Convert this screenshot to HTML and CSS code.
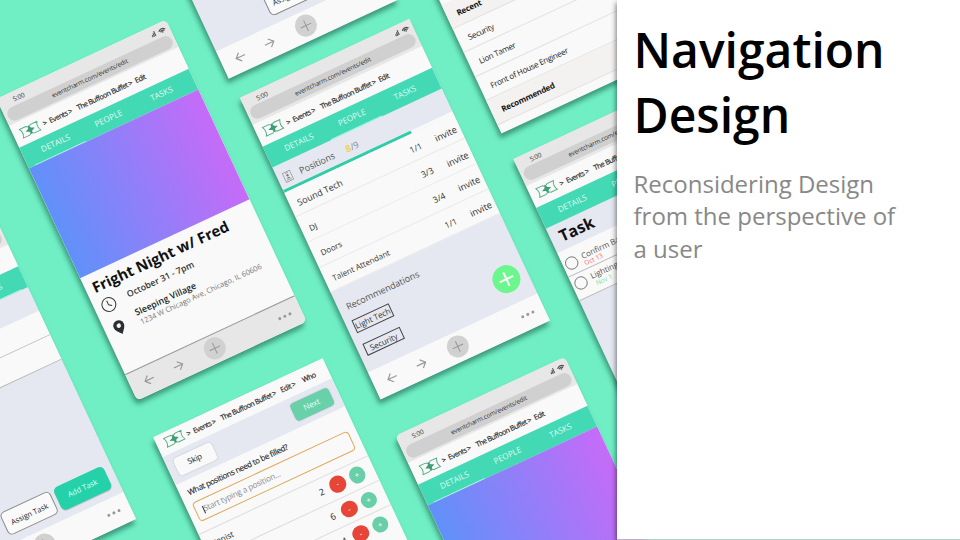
FILE: index.html
```html
<!DOCTYPE html>
<html lang="en">
<head>
<meta charset="utf-8">
<title>Navigation Design</title>
<link rel="stylesheet" href="styles.css">
</head>
<body>
<svg class="defs" aria-hidden="true">
  <symbol id="logo" viewBox="0 0 20 12"><path d="M7.500 1.500H.8Q3.600 6 .8 10.500H7.500L10 9 12.500 10.500H19.200Q16.400 6 19.200 1.500H12.500L10 3 7.500 1.500" fill="none" stroke="#4fae86" stroke-width=".9"/><path d="M10 1.200 11.500 4.500 14.800 6 11.500 7.500 10 10.800 8.500 7.500 5.200 6 8.500 4.500Z" fill="#3f9c75"/></symbol>
  <symbol id="signal" viewBox="0 0 18 7"><path d="M1.500 6.500V4.200H2.600V6.500ZM3 6.500V2.800H4.100V6.500ZM4.500 6.500V1.200H5.600V6.500Z" fill="#555"/><path d="M9.500 4Q13 .4 16.500 4M10.900 5Q13 2.900 15.100 5" fill="none" stroke="#555" stroke-width="1.300"/><circle cx="13" cy="5.700" r=".8" fill="#555"/></symbol>
  <symbol id="left" viewBox="0 0 12 12"><path d="M11 6H1.500M5.800 1.500 1.300 6 5.800 10.500" fill="none" stroke="#999" stroke-width="1.200"/></symbol>
  <symbol id="right" viewBox="0 0 12 12"><path d="M1 6H10.500M6.200 1.500 10.700 6 6.200 10.500" fill="none" stroke="#999" stroke-width="1.200"/></symbol>
  <symbol id="add" viewBox="0 0 24 24"><circle cx="12" cy="12" r="11.500" fill="#d1d1d1"/><path d="M12 6V18M6 12H18" stroke="#969696" stroke-width="1"/></symbol>
  <symbol id="dots" viewBox="0 0 16 4"><g fill="#999"><circle cx="2" cy="2" r="1.600"/><circle cx="8" cy="2" r="1.600"/><circle cx="14" cy="2" r="1.600"/></g></symbol>
</svg>
<main class="slide">
  <section class="art">
    <div class="board">

      <article class="phone at-left">
        <div class="browser"><div class="status"><span>5:00</span><svg class="sig"><use href="#signal"/></svg></div><div class="url">eventcharm.com/events/edit</div></div>
        <nav class="crumbs"></nav>
        <div class="tabs"><span>DETAILS</span><span>PEOPLE</span><span class="on">TASKS</span></div>
        <h3 class="task-title"></h3>
        <div class="task first"></div><div class="task"></div>
        <div class="actions"><span class="assign">Assign Task</span><span class="add-task">Add Task</span></div>
        <footer class="bar"><svg class="arr"><use href="#left"/></svg><svg class="arr"><use href="#right"/></svg><svg class="plus"><use href="#add"/></svg><svg class="dots"><use href="#dots"/></svg></footer>
      </article>

      <article class="phone round at-details">
        <div class="browser"><div class="status"><span>5:00</span><svg class="sig"><use href="#signal"/></svg></div><div class="url">eventcharm.com/events/edit</div></div>
        <nav class="crumbs"><svg class="logo"><use href="#logo"/></svg><span class="c0">&gt;</span><span class="c1">Events &gt;</span><span class="c2">The Buffoon Buffet &gt;</span><span class="c3">Edit</span></nav>
        <div class="tabs"><span class="on">DETAILS</span><span>PEOPLE</span><span>TASKS</span></div>
        <div class="hero"></div>
        <div class="info">
          <h2>Fright Night w/ Fred</h2>
          <div class="line"><svg class="clock" viewBox="0 0 16 16"><circle cx="8" cy="8" r="7" fill="none" stroke="#333" stroke-width="1"/><path d="M7.600 3.600V8.200L10.600 10.200" fill="none" stroke="#333" stroke-width="1"/></svg><b class="date">October 31 - 7pm</b></div>
          <div class="line place"><svg class="pin" viewBox="0 0 13 17"><path fill-rule="evenodd" d="M6.500 .5A6 6 0 0 0 .5 6.500C.5 10 4 13 6.500 16.500 9 13 12.500 10 12.500 6.500A6 6 0 0 0 6.500 .5ZM6.500 4A2.400 2.400 0 1 1 6.500 8.800 2.400 2.400 0 0 1 6.500 4Z" fill="#2b2f31"/></svg><div><b class="venue">Sleeping Village</b><p class="addr">1234 W Chicago Ave, Chicago, IL 60606</p></div></div>
        </div>
        <footer class="bar grey"><svg class="arr"><use href="#left"/></svg><svg class="arr"><use href="#right"/></svg><svg class="plus"><use href="#add"/></svg><svg class="dots"><use href="#dots"/></svg></footer>
      </article>

      <article class="phone at-top">
        <div class="actions"><span class="assign">Assign Task</span><span class="add-task"></span></div>
        <footer class="bar"><svg class="arr"><use href="#left"/></svg><svg class="arr"><use href="#right"/></svg><svg class="plus"><use href="#add"/></svg><svg class="dots"><use href="#dots"/></svg></footer>
      </article>

      <article class="phone at-people">
        <div class="browser"><div class="status"><span>5:00</span><svg class="sig"><use href="#signal"/></svg></div><div class="url">eventcharm.com/events/edit</div></div>
        <nav class="crumbs"><svg class="logo"><use href="#logo"/></svg><span class="c0">&gt;</span><span class="c1">Events &gt;</span><span class="c2">The Buffoon Buffet &gt;</span><span class="c3">Edit</span></nav>
        <div class="tabs"><span>DETAILS</span><span class="on">PEOPLE</span><span>TASKS</span></div>
        <div class="positions"><svg class="badge" viewBox="0 0 9 11"><path d="M.5 .5H8.500V10.500H.5ZM3 1.800H6M2 8.800H7" fill="none" stroke="#777" stroke-width=".6"/><circle cx="4.500" cy="4.300" r="1.200" fill="#777"/><path d="M2.500 7.500Q4.500 4.800 6.500 7.500Z" fill="#777"/></svg><span class="label">Positions</span><span class="count"><i>8</i>/9</span></div>
        <div class="progress"><div></div></div>
        <ul class="roles">
          <li class="big"><span>Sound Tech</span><em>1/1</em><a>invite</a></li>
          <li><span>DJ</span><em>3/3</em><a>invite</a></li>
          <li><span>Doors</span><em>3/4</em><a>invite</a></li>
          <li><span>Talent Attendant</span><em>1/1</em><a>invite</a></li>
        </ul>
        <div class="recs">
          <div><h4>Recommendations</h4><span class="chip">Light Tech</span><span class="chip two">Security</span></div>
          <svg class="fab" viewBox="0 0 28 28"><circle cx="14" cy="14" r="14" fill="#6bf78e"/><path d="M14 6.500V21.500M6.500 14H21.500" stroke="#fff" stroke-width="2"/></svg>
        </div>
        <footer class="bar"><svg class="arr"><use href="#left"/></svg><svg class="arr"><use href="#right"/></svg><svg class="plus"><use href="#add"/></svg><svg class="dots"><use href="#dots"/></svg></footer>
      </article>

      <article class="phone at-list">
        <ul class="picks">
          <li class="head">Recent</li><li>Security</li><li>Lion Tamer</li><li>Front of House Engineer</li><li class="head">Recommended</li>
        </ul>
      </article>

      <article class="phone at-task">
        <div class="browser"><div class="status"><span>5:00</span></div><div class="url">eventcharm.com/events/edit</div></div>
        <nav class="crumbs"><svg class="logo"><use href="#logo"/></svg><span class="c0">&gt;</span><span class="c1">Events &gt;</span><span class="c2">The Buffoon Buffet &gt;</span></nav>
        <div class="tabs"><span>DETAILS</span><span>PEOPLE</span></div>
        <h3 class="task-title">Task</h3>
        <div class="task first"><svg class="ring" viewBox="0 0 14 14"><circle cx="7" cy="7" r="6.200" fill="none" stroke="#666" stroke-width=".8"/></svg><div><p>Confirm Ba</p><small class="red">Oct 13</small></div></div>
        <div class="task second"><svg class="ring" viewBox="0 0 14 14"><circle cx="7" cy="7" r="6.200" fill="none" stroke="#666" stroke-width=".8"/></svg><div><p>Lighting</p><small class="green">Nov 1</small></div></div>
      </article>

      <article class="phone at-form">
        <nav class="crumbs short"><svg class="logo"><use href="#logo"/></svg><span class="c0">&gt;</span><span class="c1">Events &gt;</span><span class="c2">The Buffoon Buffet &gt;</span><span class="c3">Edit &gt;</span><span class="c4">Who</span></nav>
        <div class="steps"><span class="skip">Skip</span><span class="next">Next</span></div>
        <div class="ask"><label>What positions need to be filled?</label><div class="field">Start typing a position...</div></div>
        <ul class="amounts">
          <li><span>Pianist</span><em>2</em><i class="minus">-</i><i>+</i></li>
          <li><span></span><em>6</em><i class="minus">-</i><i>+</i></li>
          <li><span></span><em>4</em><i class="minus">-</i><i>+</i></li>
        </ul>
      </article>

      <article class="phone round at-copy">
        <div class="browser"><div class="status"><span>5:00</span><svg class="sig"><use href="#signal"/></svg></div><div class="url">eventcharm.com/events/edit</div></div>
        <nav class="crumbs"><svg class="logo"><use href="#logo"/></svg><span class="c0">&gt;</span><span class="c1">Events &gt;</span><span class="c2">The Buffoon Buffet &gt;</span><span class="c3">Edit</span></nav>
        <div class="tabs"><span class="on">DETAILS</span><span>PEOPLE</span><span>TASKS</span></div>
        <div class="hero"></div>
      </article>

    </div>
  </section>
  <section class="panel">
    <h1>Navigation Design</h1>
    <p>Reconsidering Design from the perspective of a user</p>
  </section>
</main>
</body>
</html>
```
FILE: styles.css
```css
* { box-sizing: border-box; margin: 0; padding: 0; }
body { width: 960px; height: 540px; overflow: hidden; font-family: "Open Sans", "Noto Sans", sans-serif; background: #fff; }
.defs { display: none; }
ul { list-style: none; }
i, em { font-style: normal; }
svg { flex: none; display: block; }

.slide { display: flex; width: 960px; height: 540px; }
.art { position: relative; flex: 0 0 617px; overflow: hidden; background: #70efc5; }
.panel { position: relative; flex: 1; padding: 17px 56px 0 16.500px; background: linear-gradient(90deg, #c3abc9 24px, #a9d3c5 34px) 0 100% / 100% 1px no-repeat #fff; box-shadow: -1px 3px 5px rgba(0, 0, 0, .5); }
.panel h1 { font-size: 48px; line-height: 65.400px; font-weight: 600; color: #000; }
.panel p { margin-top: 20px; font-size: 24px; line-height: 32.600px; color: #888; }

/* free canvas: every phone sits on one tilted board */
.board { position: absolute; left: 0; top: 0; width: 0; height: 0; transform: rotate(-25deg); transform-origin: 0 0; }
.phone { position: absolute; display: flex; flex-direction: column; width: 187px; height: 333px; overflow: hidden; background: #e5e8f1; box-shadow: -3px 4px 5px rgba(10, 70, 50, .5); white-space: nowrap; color: #333; }
.round { border-radius: 5px; }
.at-left { left: -283px; top: 194.500px; }
.at-details { left: -45.200px; top: 88.200px; background: #f9f9f9; }
.at-top { left: 173.500px; top: -165.500px; }
.at-people { left: 175.800px; top: 189.500px; }
.at-list { left: 398px; top: 0; background: #f9f9f9; }
.at-task { left: 397.800px; top: 360.500px; }
.at-form { left: -46px; top: 460.500px; background: #f9f9f9; }
.at-copy { left: 174px; top: 562px; }

.browser { flex: 0 0 30px; padding: 2px 3px 0; background: #e7e7e7; }
.status { display: flex; justify-content: space-between; align-items: center; height: 11.500px; padding: 0 0 0 12px; font-size: 6.500px; letter-spacing: -.15px; }
.sig { width: 18px; height: 7px; }
.url { height: 14px; border-radius: 7px; background: #d0d0d0; font-size: 6.400px; line-height: 14.500px; text-align: center; color: #333; letter-spacing: -.1px; }
.crumbs { flex: 0 0 24px; display: flex; align-items: center; padding-left: 7.500px; background: #f9f9f9; font-size: 7.200px; letter-spacing: -.45px; color: #222; -webkit-text-stroke: .15px #222; }
.logo { width: 21px; height: 12.600px; }
.c0 { width: 10.500px; padding-left: 3.500px; }
.c1 { width: 30.500px; }
.c2 { width: 64px; }
.c3 { width: 26px; }
.short { flex-basis: 22px; }
.short .c2 { width: 66px; }
.short .c3 { width: 24px; }
.tabs { flex: 0 0 23px; display: flex; padding-left: 7px; background: #43d9b4; color: #dffaf2; font-size: 8.200px; }
.tabs span { width: 56px; margin-right: 2.500px; line-height: 21.500px; text-align: center; }
.tabs .on { border-bottom: 1.600px solid #b4f7e8; }
.hero { flex: 0 0 121px; background: linear-gradient(90deg, #6091f9, #c66bf8); }

.info { flex: 1; }
.info h2 { padding: 1px 0 0 7.500px; margin-top: 2px; font-size: 14.900px; line-height: 23px; color: #111; }
.line { display: flex; align-items: center; }
.clock { width: 16px; height: 16px; margin: 1.500px 12.500px 0 7.500px; }
.date { font-size: 8.800px; font-weight: 600; line-height: 14px; padding-top: 1px; }
.place { margin-top: 5px; }
.pin { width: 12px; height: 16.500px; margin: 4px 14.800px 0 8.700px; }
.venue { display: block; font-size: 8.900px; font-weight: 600; line-height: 11px; color: #222; }
.addr { font-size: 7.400px; line-height: 10px; color: #777; padding-left: 1px; }

.bar { flex: 0 0 29.500px; margin-top: auto; display: flex; align-items: center; padding-left: 14.500px; background: #f9f9f9; }
.bar.grey { background: #e7e7e7; border-top: .7px solid #999; }
.arr { width: 12px; height: 12px; margin-right: 20px; }
.plus { width: 23px; height: 23px; margin: 0 57.300px 0 3px; }
.dots { width: 15px; height: 4px; }

.positions { flex: 0 0 25.500px; display: flex; align-items: center; padding: 4px 0 0 6px; }
.badge { width: 9px; height: 11px; margin-right: 8.500px; }
.label { width: 51px; font-size: 9px; font-weight: 500; color: #555; }
.count { font-size: 9px; color: #888; }
.count i { color: #efd040; -webkit-text-stroke: .3px #efd040; }
.progress { flex: 0 0 2.500px; background: #f9f9f9; }
.progress div { width: 141px; height: 2.500px; border-radius: 0 1px 1px 0; background: #30cda6; }
.roles li { display: flex; align-items: center; height: 27.700px; padding: 3.500px 0 0 8.200px; background: #f9f9f9; border-bottom: .7px solid #e9e9ec; font-size: 8px; }
.roles .big { font-size: 9px; }
.roles span { width: 123.800px; }
.roles em { width: 28px; font-size: 8.600px; }
.roles a { font-size: 9.200px; }
.recs { flex: 1; display: flex; justify-content: space-between; padding: 12px 7.500px 0 6px; }
.recs h4 { padding-left: 2.500px; font-size: 9.100px; line-height: 16px; font-weight: 500; color: #555; }
.chip { display: block; width: 41px; height: 14px; margin: 6px 0 0 1px; border: .8px solid #444; font-size: 8px; line-height: 12.500px; text-align: center; }
.chip.two { margin-top: 12px; height: 13px; }
.fab { width: 28px; height: 28px; margin-top: 36px; }

.picks { margin-top: 191px; }
.picks li { height: 26.600px; padding-left: 10.500px; border-bottom: .7px solid #e2e2e2; font-size: 8px; line-height: 28.500px; letter-spacing: -.25px; color: #222; }
.picks .head { background: #f4f2f1; font-weight: 700; letter-spacing: -.15px; color: #111; }

.task-title { flex: 0 0 26.500px; padding-left: 9.500px; font-size: 16px; line-height: 27px; color: #111; }
.task { flex: 0 0 26.500px; display: flex; padding: 2.500px 0 0 1.800px; background: #f9f9f9; border-bottom: .8px solid #bbb; }
.task.first { flex-basis: 27px; }
.ring { width: 14px; height: 14px; margin: 6px 5px 0 0; }
.second .ring { margin-top: 1px; }
.second { padding-top: 2px; }
.task p { font-size: 8px; line-height: 9px; margin-top: 5.500px; color: #555; }
.second p { margin-top: 1px; }
.task small { display: block; font-size: 6.500px; line-height: 7px; }
.second small { margin: 1px 0 0 2px; }
.red { color: #f46a62; }
.green { color: #73e993; }
.actions { display: flex; gap: 4px; margin: auto 8px 8.500px auto; }
.actions span { width: 55px; height: 25px; border-radius: 5px; font-size: 7.500px; line-height: 24px; text-align: center; }
.assign { background: #fafafa; border: .7px solid #888; color: #222; }
.add-task { background: #24d1a8; color: #e3fff6; box-shadow: 0 1px 1px rgba(0, 0, 0, .2); }
.actions + .bar { margin-top: 0; }

.steps { flex: 0 0 31px; display: flex; justify-content: space-between; align-items: center; padding: 0 8.500px 0 7.500px; background: #e5e8f1; }
.steps span { width: 42px; height: 19px; border-radius: 4px; font-size: 8px; line-height: 18.500px; text-align: center; letter-spacing: -.15px; box-shadow: 0 0 1.500px rgba(0, 0, 0, .25); }
.skip { background: #f9f9f9; color: #222; }
.next { background: #68d1a9; color: #e8fff6; }
.ask { flex: 0 0 54px; padding: 5.500px 8.500px 0 8px; }
.ask label { display: block; height: 18px; font-size: 8px; line-height: 14px; letter-spacing: -.35px; color: #222; -webkit-text-stroke: .12px #222; }
.field { height: 21px; margin-left: -1.500px; padding-left: 7.500px; border: 1.200px solid #dfa856; border-radius: 4px; font-size: 8px; line-height: 18px; color: #888; letter-spacing: -.15px; }
.field::before { content: ""; display: inline-block; width: .6px; height: 8px; background: #333; vertical-align: -1.500px; }
.amounts li { display: flex; align-items: center; height: 27.200px; padding-left: 7px; border-top: .7px solid #ddd; font-size: 8px; color: #222; }
.amounts span { width: 120px; }
.amounts em { width: 12px; font-size: 9px; color: #222; }
.amounts i { width: 16.500px; height: 16.500px; margin-right: 5px; border-radius: 50%; background: #68cfa8; color: #fff; line-height: 15.500px; text-align: center; }
.amounts .minus { background: #e64537; }
```
